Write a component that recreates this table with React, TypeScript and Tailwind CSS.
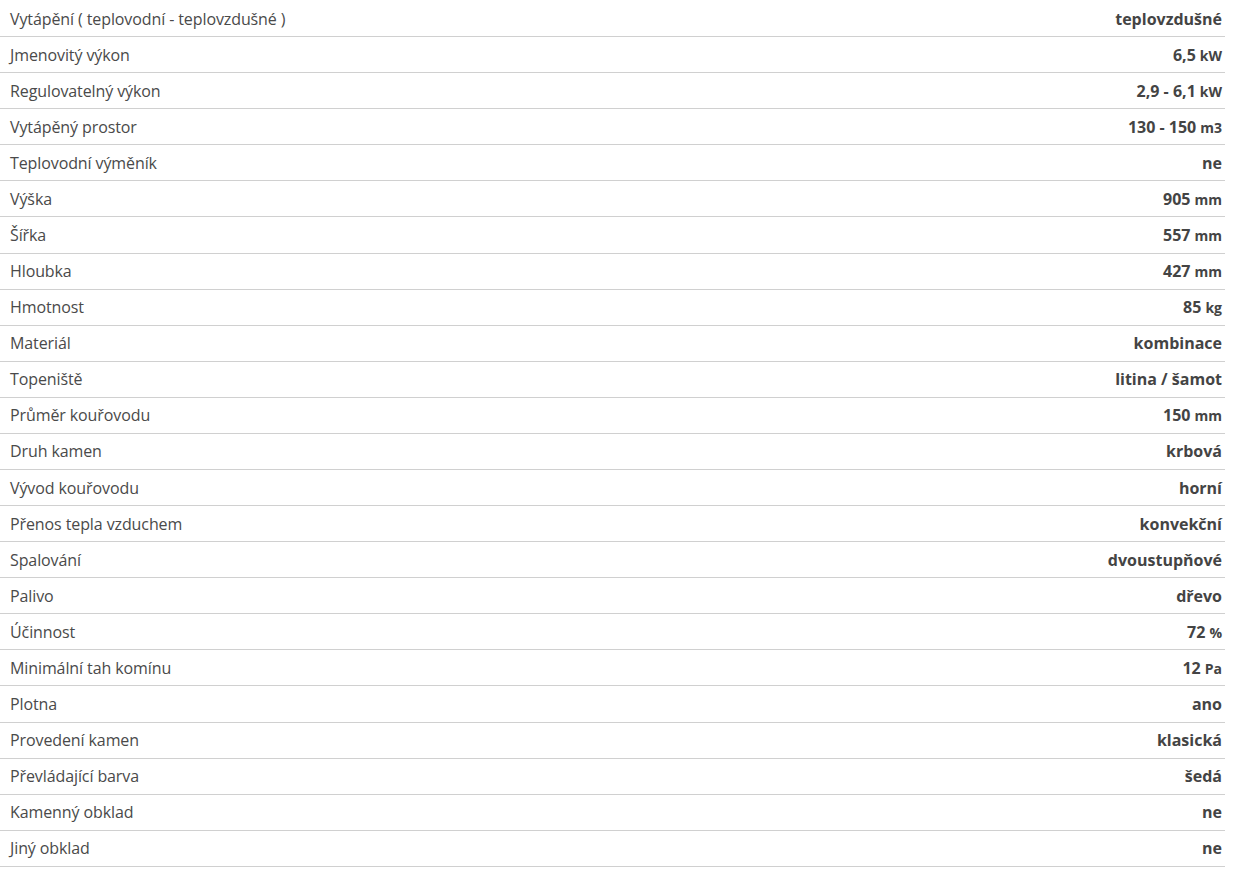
import React from "react";

const rows: [string, string, string?][] = [
  ["Vytápění ( teplovodní - teplovzdušné )", "teplovzdušné"],
  ["Jmenovitý výkon", "6,5", "kW"],
  ["Regulovatelný výkon", "2,9 - 6,1", "kW"],
  ["Vytápěný prostor", "130 - 150", "m3"],
  ["Teplovodní výměník", "ne"],
  ["Výška", "905", "mm"],
  ["Šířka", "557", "mm"],
  ["Hloubka", "427", "mm"],
  ["Hmotnost", "85", "kg"],
  ["Materiál", "kombinace"],
  ["Topeniště", "litina / šamot"],
  ["Průměr kouřovodu", "150", "mm"],
  ["Druh kamen", "krbová"],
  ["Vývod kouřovodu", "horní"],
  ["Přenos tepla vzduchem", "konvekční"],
  ["Spalování", "dvoustupňové"],
  ["Palivo", "dřevo"],
  ["Účinnost", "72", "%"],
  ["Minimální tah komínu", "12", "Pa"],
  ["Plotna", "ano"],
  ["Provedení kamen", "klasická"],
  ["Převládající barva", "šedá"],
  ["Kamenný obklad", "ne"],
  ["Jiný obklad", "ne"],
];

export default function App() {
  return (
    <div
      className="w-[1225px] bg-white pt-[1px] text-[#444]"
      style={{ fontFamily: '"Open Sans", "Noto Sans", sans-serif' }}
    >
      {rows.map(([label, value, unit], i) => (
        <div
          key={i}
          className="flex h-[36.09px] items-center justify-between border-b border-[#d0d0d0] pl-[10px] pr-[3px]"
        >
          <span className="text-[16px] tracking-[-0.1px] text-[#4a4a4a]">{label}</span>
          <span className="text-[16px] font-bold text-[#444]">
            {value}
            {unit && <span className="ml-[4px] text-[14px]">{unit}</span>}
          </span>
        </div>
      ))}
    </div>
  );
}
